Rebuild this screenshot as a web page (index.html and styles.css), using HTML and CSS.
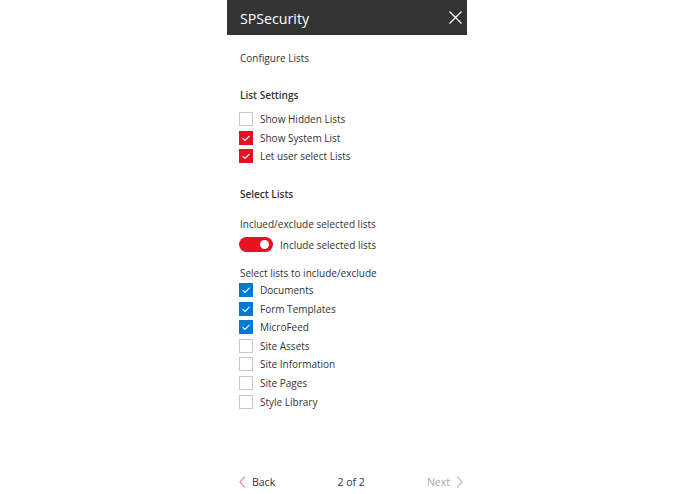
FILE: index.html
```html
<!DOCTYPE html>
<html>
<head>
<meta charset="utf-8">
<link rel="stylesheet" href="styles.css">
</head>
<body>
<div class="page">
  <div class="panel">
    <div class="header">
      <span class="title">SPSecurity</span>
      <svg class="close" width="13" height="13" viewBox="0 0 13 13"><path d="M0.5 0.5 L12.5 12.5 M12.5 0.5 L0.5 12.5" stroke="#fff" stroke-width="1.3" fill="none"/></svg>
    </div>
    <div class="content">
      <div class="subtitle">Configure Lists</div>
      <div class="section-title first">List Settings</div>
      <div class="checklist top">
        <div class="row"><span class="box"></span><span class="label">Show Hidden Lists</span></div>
        <div class="row"><span class="box red"><svg viewBox="0 0 14 14"><path d="M3.5 7.2 L6 9.5 L10.5 4.8" stroke="#fff" stroke-width="1.1" fill="none"/></svg></span><span class="label">Show System List</span></div>
        <div class="row"><span class="box red"><svg viewBox="0 0 14 14"><path d="M3.5 7.2 L6 9.5 L10.5 4.8" stroke="#fff" stroke-width="1.1" fill="none"/></svg></span><span class="label">Let user select Lists</span></div>
      </div>
      <div class="section-title second">Select Lists</div>
      <div class="text inclued">Inclued/exclude selected lists</div>
      <div class="toggle-row">
        <span class="toggle"><span class="knob"></span></span>
        <span class="label">Include selected lists</span>
      </div>
      <div class="text select">Select lists to include/exclude</div>
      <div class="checklist">
        <div class="row"><span class="box blue"><svg viewBox="0 0 14 14"><path d="M3.5 7.2 L6 9.5 L10.5 4.8" stroke="#fff" stroke-width="1.1" fill="none"/></svg></span><span class="label">Documents</span></div>
        <div class="row"><span class="box blue"><svg viewBox="0 0 14 14"><path d="M3.5 7.2 L6 9.5 L10.5 4.8" stroke="#fff" stroke-width="1.1" fill="none"/></svg></span><span class="label">Form Templates</span></div>
        <div class="row"><span class="box blue"><svg viewBox="0 0 14 14"><path d="M3.5 7.2 L6 9.5 L10.5 4.8" stroke="#fff" stroke-width="1.1" fill="none"/></svg></span><span class="label">MicroFeed</span></div>
        <div class="row"><span class="box"></span><span class="label">Site Assets</span></div>
        <div class="row"><span class="box"></span><span class="label">Site Information</span></div>
        <div class="row"><span class="box"></span><span class="label">Site Pages</span></div>
        <div class="row"><span class="box"></span><span class="label">Style Library</span></div>
      </div>
    </div>
    <div class="footer">
      <span class="nav back"><svg width="7" height="12" viewBox="0 0 7 12"><path d="M6 0.5 L1 6 L6 11.5" stroke="#e8707c" stroke-width="1.1" fill="none"/></svg>Back</span>
      <span class="pager">2 of 2</span>
      <span class="nav next">Next<svg width="7" height="12" viewBox="0 0 7 12"><path d="M1 0.5 L6 6 L1 11.5" stroke="#b3b3b3" stroke-width="1.1" fill="none"/></svg></span>
    </div>
  </div>
</div>
</body>
</html>
```
FILE: styles.css
```css
html, body {
  margin: 0;
  padding: 0;
  background: #fff;
}
body {
  font-family: "Open Sans", "Noto Sans", "Liberation Sans", sans-serif;
  color: #333;
  font-size: 10px;
}
.page {
  display: flex;
  justify-content: center;
  width: 695px;
  height: 494px;
}
.panel {
  width: 240px;
  margin-left: -1px;
  height: 494px;
  display: flex;
  flex-direction: column;
  background: #fff;
}
.header {
  height: 35px;
  background: #333333;
  display: flex;
  align-items: center;
  justify-content: space-between;
  padding: 0 4px 0 13px;
}
.title {
  color: #fff;
  font-size: 14.2px;
  padding-top: 1px;
}
.close {
  display: block;
  margin-right: 1px;
}
.content {
  padding: 0 12px 0 13px;
  display: flex;
  flex-direction: column;
}
.subtitle {
  line-height: 16px;
  margin-top: 15px;
}
.section-title {
  font-weight: 600;
  line-height: 16px;
}
.section-title.first { margin-top: 21px; }
.section-title.second { margin-top: 20px; }
.checklist.top { margin-top: 7px; }
.row {
  height: 18.6px;
  display: flex;
  align-items: center;
}
.box {
  width: 14px;
  height: 14px;
  box-sizing: border-box;
  border: 1px solid #c8c8c8;
  background: #fff;
  margin-right: 7px;
  margin-left: -1px;
  flex: none;
  display: flex;
}
.box svg { width: 14px; height: 14px; margin: -1px; }
.box.red { background: #e81123; border-color: #e81123; }
.box.blue { background: #0078d4; border-color: #0078d4; }
.text { line-height: 16px; }
.inclued { margin-top: 14px; }
.toggle-row {
  margin-top: 4px;
  height: 18px;
  display: flex;
  align-items: center;
}
.toggle {
  width: 34px;
  height: 15px;
  margin-left: -1px;
  border-radius: 8px;
  background: #e81123;
  display: flex;
  align-items: center;
  justify-content: flex-end;
  padding-right: 4px;
  box-sizing: border-box;
  margin-right: 7px;
}
.knob {
  width: 9px;
  height: 9px;
  border-radius: 50%;
  background: #fff;
}
.select { margin-top: 11px; }
.footer {
  margin-top: auto;
  height: 24px;
  display: flex;
  align-items: center;
  justify-content: space-between;
  padding: 0 4px 0 12px;
  font-size: 10.5px;
}
.nav {
  display: flex;
  align-items: center;
  gap: 6px;
}
.next { color: #a6a6a6; }
.nav svg { display: block; }
```
